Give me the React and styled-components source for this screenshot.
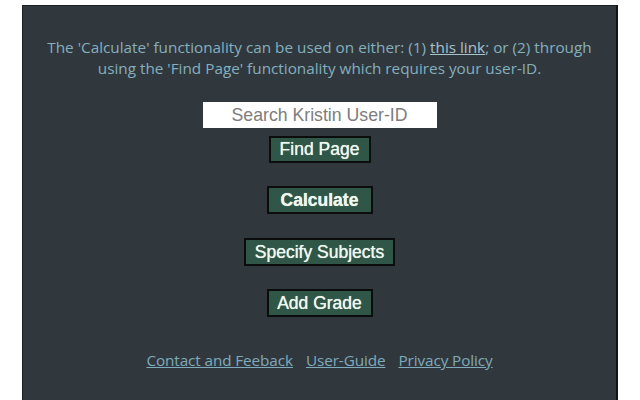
import React from "react";
import styled, { createGlobalStyle } from "styled-components";

const Global = createGlobalStyle`
  html, body { margin: 0; padding: 0; background: #ffffff; }
  body { font-family: "Open Sans", "Noto Sans", sans-serif; }
`;

const Panel = styled.div`
  margin: 5px 0 0 22px;
  width: 596px;
  height: 420px;
  background: #31383d;
  border-top: 1px solid #1c1f22;
  border-left: 1px solid #1c1f22;
  border-right: 2px solid #111416;
  display: flex;
  flex-direction: column;
  align-items: center;
  padding-top: 31px;
  box-sizing: border-box;
`;

const Intro = styled.p`
  margin: 0;
  width: 590px;
  text-align: center;
  color: #84afbd;
  font-family: "Open Sans", sans-serif;
  font-size: 15.3px;
  line-height: 21px;
`;

const InlineLink = styled.a`
  color: #a6c3cc;
  text-decoration: underline;
`;

const Search = styled.input`
  margin-top: 23px;
  width: 234px;
  height: 26px;
  box-sizing: border-box;
  border: none;
  outline: none;
  background: #ffffff;
  text-align: center;
  font-family: "Liberation Sans", Arial, sans-serif;
  font-size: 17.7px;
  color: #333;
  padding: 0;
  &::placeholder { color: #7d7d7d; }
`;

const Button = styled.button`
  margin-top: ${(p) => p.$gap}px;
  width: ${(p) => p.$w}px;
  height: ${(p) => p.$h}px;
  box-sizing: border-box;
  background: #2f5646;
  border: 2px solid #0b0d0c;
  color: #eef8ee;
  font-family: "Liberation Sans", Arial, sans-serif;
  font-size: 17.5px;
  font-weight: ${(p) => (p.$bold ? 700 : 400)};
  text-shadow: 0 0 0.7px #eef8ee;
  padding: 0;
  cursor: pointer;
`;

const Footer = styled.div`
  margin-top: 33px;
  display: flex;
  gap: 13px;
`;

const FooterLink = styled.a`
  color: #7eaabb;
  font-family: "Open Sans", sans-serif;
  font-size: 15.3px;
  letter-spacing: -0.1px;
  text-decoration: underline;
`;

export default function App() {
  return (
    <>
      <Global />
      <Panel>
        <Intro>
          The 'Calculate' functionality can be used on either: (1){" "}
          <InlineLink href="#">this link</InlineLink>; or (2) through
          <br />
          using the 'Find Page' functionality which requires your user-ID.
        </Intro>
        <Search placeholder="Search Kristin User-ID" />
        <Button $gap={8} $w={102} $h={27}>Find Page</Button>
        <Button $gap={23} $w={106} $h={28} $bold>Calculate</Button>
        <Button $gap={24} $w={151} $h={28}>Specify Subjects</Button>
        <Button $gap={23} $w={106} $h={28}>Add Grade</Button>
        <Footer>
          <FooterLink href="#">Contact and Feeback</FooterLink>
          <FooterLink href="#">User-Guide</FooterLink>
          <FooterLink href="#">Privacy Policy</FooterLink>
        </Footer>
      </Panel>
    </>
  );
}
